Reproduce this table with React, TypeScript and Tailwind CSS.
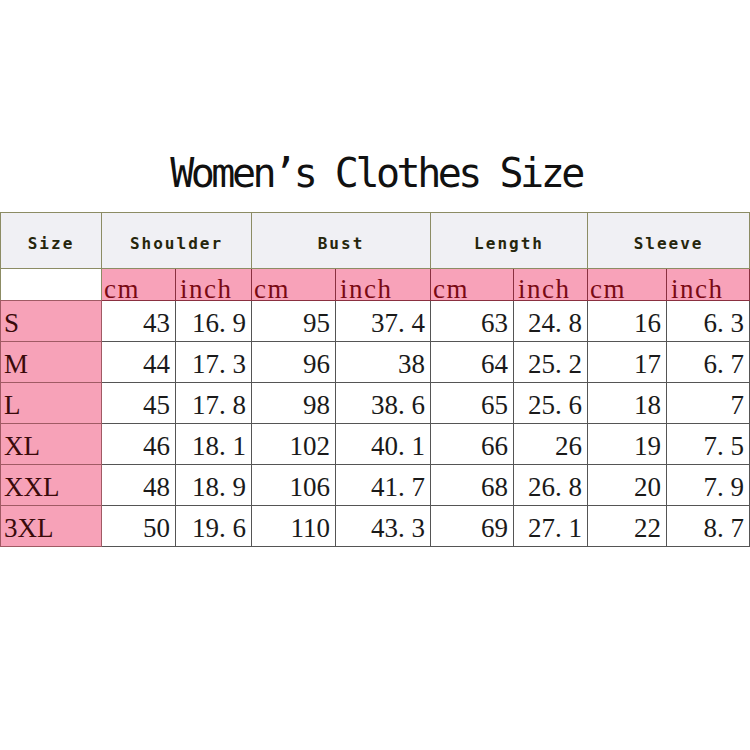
const groups = ["Shoulder", "Bust", "Length", "Sleeve"]

const rows: [string, string[]][] = [
  ["S", ["43", "16.9", "95", "37.4", "63", "24.8", "16", "6.3"]],
  ["M", ["44", "17.3", "96", "38", "64", "25.2", "17", "6.7"]],
  ["L", ["45", "17.8", "98", "38.6", "65", "25.6", "18", "7"]],
  ["XL", ["46", "18.1", "102", "40.1", "66", "26", "19", "7.5"]],
  ["XXL", ["48", "18.9", "106", "41.7", "68", "26.8", "20", "7.9"]],
  ["3XL", ["50", "19.6", "110", "43.3", "69", "27.1", "22", "8.7"]],
]

// half-width period like the original sheet's font
function Num({ v }: { v: string }) {
  const [a, b] = v.split(".")
  if (b === undefined) return <>{v}</>
  return (
    <>
      {a}
      <span className="inline-block w-[0.5em] text-left">.</span>
      {b}
    </>
  )
}

export default function App() {
  return (
    <main className="w-[750px] h-[750px] bg-white overflow-hidden">
      {/* Title */}
      <div className="h-[212px] flex justify-center items-end pb-[19px]">
        <h1 className="font-['DejaVu_Sans_Mono',monospace] text-[40px] leading-none tracking-[-3.5px] text-[#111] pl-[2px]">
          Women’s Clothes Size
        </h1>
      </div>

      {/* Size table */}
      <table className="table-fixed border-collapse w-[749px]">
        <colgroup>
          <col className="w-[101px]" />
          <col className="w-[74px]" />
          <col className="w-[76px]" />
          <col className="w-[84px]" />
          <col className="w-[95px]" />
          <col className="w-[83px]" />
          <col className="w-[74px]" />
          <col className="w-[79px]" />
          <col className="w-[83px]" />
        </colgroup>
        <thead>
          <tr className="h-[56px] bg-[#f0f0f4] font-['DejaVu_Sans_Mono',monospace] font-bold text-[16px] tracking-[2px] text-[#26260c]">
            <th className="border border-[#8c8c64] font-bold pt-[6px]">Size</th>
            {groups.map((g) => (
              <th key={g} colSpan={2} className="border border-[#8c8c64] font-bold pt-[6px]">
                {g}
              </th>
            ))}
          </tr>
          <tr className="h-[32px] font-['Liberation_Serif',serif] text-[27px] tracking-[1.5px] leading-[20px] text-[#7a0a14]">
            <th className="border border-[#8c8c64] border-b-[#a05a64] bg-white" />
            {groups.map((g) => (
              <>
                <th key={g + "cm"} className="border border-[#8a3040] bg-[#f8a2b9] font-normal text-left align-bottom pl-[2px] pb-[1px]">
                  cm
                </th>
                <th key={g + "in"} className="border border-[#8a3040] bg-[#f8a2b9] font-normal text-left align-bottom pl-[4px] pb-[1px]">
                  inch
                </th>
              </>
            ))}
          </tr>
        </thead>
        <tbody className="font-['Liberation_Serif',serif] text-[27px] leading-none text-[#1a1a1a]">
          {rows.map(([size, vals]) => (
            <tr key={size} className="h-[41px]">
              <td className="border border-[#a05a64] bg-[#f7a2b8] text-left pl-[3px] pt-[4px] text-[#3a0a0a]">
                {size}
              </td>
              {vals.map((v, i) => (
                <td key={i} className="border border-[#555] text-right pr-[5px] pt-[4px]">
                  <Num v={v} />
                </td>
              ))}
            </tr>
          ))}
        </tbody>
      </table>
    </main>
  )
}
